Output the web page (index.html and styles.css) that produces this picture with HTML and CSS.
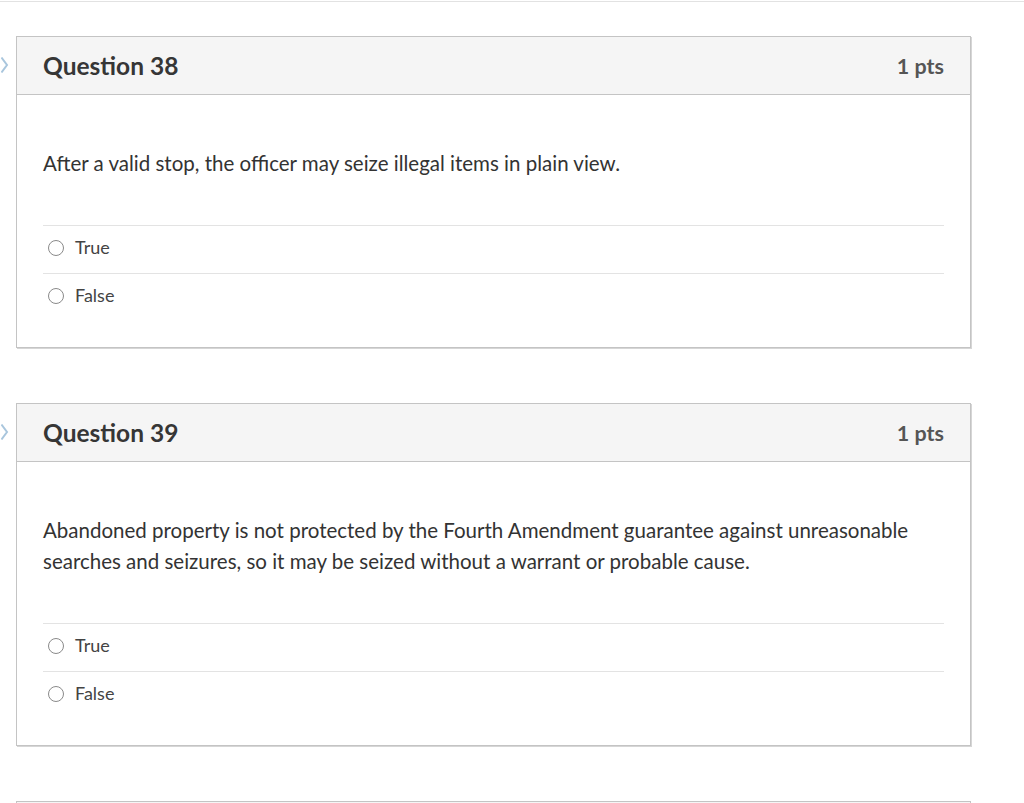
FILE: index.html
```html
<!DOCTYPE html>
<html lang="en">
<head>
<meta charset="utf-8">
<title>Quiz</title>
<link rel="stylesheet" href="styles.css">
</head>
<body>
<div class="topline"></div>
<main class="quiz">
  <section class="question">
    <svg class="marker" width="8" height="18" viewBox="0 0 8 18"><polyline points="0.5,1.5 6,9 0.5,16.5" fill="none" stroke="#a9c6dd" stroke-width="2"/></svg>
    <header class="q-header">
      <h2 class="q-title">Question 38</h2>
      <span class="q-points">1 pts</span>
    </header>
    <div class="q-body">
      <p class="q-text">After a valid stop, the officer may seize illegal items in plain view.</p>
      <div class="answers">
        <label class="answer"><span class="radio"></span><span>True</span></label>
        <label class="answer"><span class="radio"></span><span>False</span></label>
      </div>
    </div>
  </section>
  <section class="question">
    <svg class="marker" width="8" height="18" viewBox="0 0 8 18"><polyline points="0.5,1.5 6,9 0.5,16.5" fill="none" stroke="#a9c6dd" stroke-width="2"/></svg>
    <header class="q-header">
      <h2 class="q-title">Question 39</h2>
      <span class="q-points">1 pts</span>
    </header>
    <div class="q-body">
      <p class="q-text">Abandoned property is not protected by the Fourth Amendment guarantee against unreasonable searches and seizures, so it may be seized without a warrant or probable cause.</p>
      <div class="answers">
        <label class="answer"><span class="radio"></span><span>True</span></label>
        <label class="answer"><span class="radio"></span><span>False</span></label>
      </div>
    </div>
  </section>
  <section class="question question-next">
    <header class="q-header"></header>
  </section>
</main>
</body>
</html>
```

FILE: styles.css
```css
html, body {
  margin: 0;
  padding: 0;
  background: #fff;
  height: 803px;
  overflow: hidden;
}
body {
  font-family: Lato, "Open Sans", "Liberation Sans", sans-serif;
  color: #333;
}
.topline {
  margin-top: 1px;
  height: 1px;
  background: #e2e2e2;
}
.quiz {
  padding: 34px 0 0 16px;
}
.question {
  position: relative;
  width: 953px;
  border: 1px solid #c4c4c4;
  box-shadow: 1px 1px 0 #d6d6d6;
  margin-bottom: 55px;
  background: #fff;
}
.question-next {
  height: 1px;
  border-bottom: none;
  overflow: hidden;
  margin-bottom: 0;
  box-shadow: none;
}
.marker {
  position: absolute;
  left: -16px;
  top: 19px;
}
.q-header {
  display: flex;
  align-items: center;
  justify-content: space-between;
  height: 57px;
  padding: 0 26px;
  background: #f5f5f5;
  border-bottom: 1px solid #c4c4c4;
}
.q-title {
  margin: 0;
  font-size: 24.5px;
  font-weight: 700;
  color: #363636;
}
.q-points {
  font-size: 21.5px;
  font-weight: 700;
  color: #555;
}
.q-body {
  padding: 53px 26px 26px;
}
.q-text {
  margin: 0;
  font-size: 20.5px;
  line-height: 31px;
  color: #333;
}
.answers {
  margin-top: 46px;
}
.answer {
  display: flex;
  align-items: center;
  height: 47px;
  border-top: 1px solid #e3e3e3;
  box-sizing: content-box;
  font-size: 18px;
  color: #444;
}
.answer span:last-child {
  line-height: 20px;
  margin-top: -5px;
}
.radio {
  width: 14px;
  height: 14px;
  border: 1px solid #8a8a8a;
  border-radius: 50%;
  margin: -4px 11px 0 5px;
  flex: none;
}
```
